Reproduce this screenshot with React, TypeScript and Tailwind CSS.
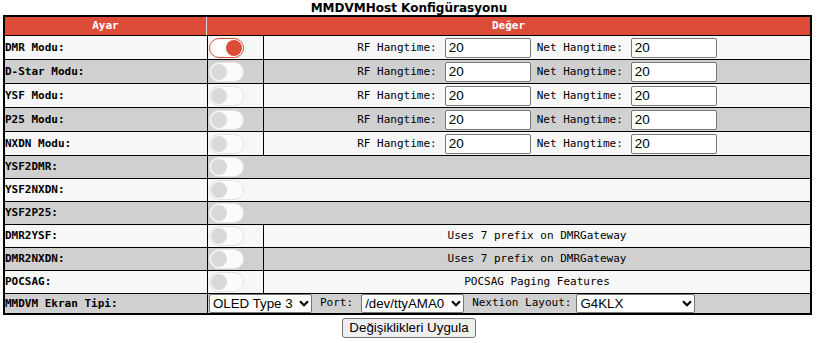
import React from 'react';

const MONO = "font-['DejaVu_Sans_Mono',monospace]";

type Row =
  | { kind: 'mode'; label: string; on?: boolean }
  | { kind: 'wide'; label: string }
  | { kind: 'note'; label: string; note: string };

const ROWS: Row[] = [
  { kind: 'mode', label: 'DMR Modu:', on: true },
  { kind: 'mode', label: 'D-Star Modu:' },
  { kind: 'mode', label: 'YSF Modu:' },
  { kind: 'mode', label: 'P25 Modu:' },
  { kind: 'mode', label: 'NXDN Modu:' },
  { kind: 'wide', label: 'YSF2DMR:' },
  { kind: 'wide', label: 'YSF2NXDN:' },
  { kind: 'wide', label: 'YSF2P25:' },
  { kind: 'note', label: 'DMR2YSF:', note: 'Uses 7 prefix on DMRGateway' },
  { kind: 'note', label: 'DMR2NXDN:', note: 'Uses 7 prefix on DMRGateway' },
  { kind: 'note', label: 'POCSAG:', note: 'POCSAG Paging Features' },
];

const Toggle: React.FC<{ on?: boolean }> = ({ on }) =>
  on ? (
    <span className="flex h-[20px] w-[35px] items-center justify-end rounded-full border-[1.5px] border-[#dd4b39] bg-white pr-[1px]">
      <span className="h-[16px] w-[16px] rounded-full bg-[#dd4b39]" />
    </span>
  ) : (
    <span className="flex h-[20px] w-[35px] items-center justify-start rounded-full border border-[#e3e3e3] bg-[#fbfbfb] pl-[1px]">
      <span className="h-[16px] w-[16px] rounded-full bg-[#d9d9d9]" />
    </span>
  );

const NumInput: React.FC = () => (
  <input
    defaultValue="20"
    className="h-[20px] w-[86px] rounded-[2px] border border-[#767676] bg-white pl-[3px] font-['Liberation_Sans',Arial,sans-serif] text-[13.5px] text-black outline-none"
  />
);

const Select: React.FC<{ w: string; value: string; options: string[] }> = ({ w, value, options }) => (
  <span className={`relative inline-flex ${w}`}>
    <select
      defaultValue={value}
      className="h-[19px] w-full appearance-none rounded-[2px] border border-[#767676] bg-white pl-[3px] font-['Liberation_Sans',Arial,sans-serif] text-[13.3px] leading-[17px] text-black outline-none"
    >
      {options.map(o => (
        <option key={o}>{o}</option>
      ))}
    </select>
    {/* dropdown chevron */}
    <svg
      className="pointer-events-none absolute right-[3px] top-[6px]"
      width="10"
      height="7"
      viewBox="0 0 10 7"
    >
      <path d="M1 1.2 L5 5.2 L9 1.2" fill="none" stroke="#000" strokeWidth="2.2" />
    </svg>
  </span>
);

export default function App() {
  return (
    <div className="w-[818px] bg-white text-black">
      <div className="h-[15px] pt-[1px] text-center font-['DejaVu_Sans',Verdana,sans-serif] text-[12px] font-bold leading-[14px]">
        MMDVMHost Konfigürasyonu
      </div>
      <div className={`ml-[3px] w-[809px] border-2 border-black ${MONO} text-[11px]`}>
        <div className="grid h-[18px] grid-cols-[202px_1fr] bg-[#dd4b39] font-bold text-white">
          <div className="flex items-center justify-center border-r border-[#d8d8d8]">Ayar</div>
          <div className="flex items-center justify-center">Değer</div>
        </div>
        {ROWS.map((r, i) => {
          const bg = i % 2 === 0 ? 'bg-[#f7f7f7]' : 'bg-[#d0d0d0]';
          const label = <div className="flex items-center pt-[1px] font-bold">{r.label}</div>;
          if (r.kind === 'mode') {
            return (
              <div key={r.label} className={`grid h-[24px] grid-cols-[202px_56px_1fr] border-t border-black ${bg}`}>
                {label}
                <div className="flex items-center border-l border-black pl-[1px]">
                  <Toggle on={r.on} />
                </div>
                <div className="flex items-center justify-center border-l border-black pt-[1px]">
                  <span className="mr-[8px]">RF Hangtime:</span>
                  <NumInput />
                  <span className="ml-[6px] mr-[8px]">Net Hangtime:</span>
                  <NumInput />
                </div>
              </div>
            );
          }
          if (r.kind === 'wide') {
            return (
              <div key={r.label} className={`grid h-[23px] grid-cols-[202px_1fr] border-t border-black ${bg}`}>
                {label}
                <div className="flex items-center border-l border-black pl-[1px]">
                  <Toggle />
                </div>
              </div>
            );
          }
          return (
            <div key={r.label} className={`grid h-[23px] grid-cols-[202px_56px_1fr] border-t border-black ${bg}`}>
              {label}
              <div className="flex items-center border-l border-black pl-[1px]">
                <Toggle />
              </div>
              <div className="flex items-center justify-center border-l border-black pt-[1px]">{r.note}</div>
            </div>
          );
        })}
        <div className="grid h-[20px] grid-cols-[202px_1fr] border-t border-black bg-[#d0d0d0]">
          <div className="flex items-center pt-[1px] font-bold">MMDVM Ekran Tipi:</div>
          <div className="flex items-center border-l border-black pl-[1px]">
            <Select w="w-[103px]" value="OLED Type 3" options={['OLED Type 3', 'OLED Type 6', 'Nextion', 'HD44780', 'None']} />
            <span className="ml-[8px] mr-[8px]">Port:</span>
            <Select w="w-[103px]" value="/dev/ttyAMA0" options={['/dev/ttyAMA0', '/dev/ttyUSB0', 'modem']} />
            <span className="ml-[8px] mr-[5px]">Nextion Layout:</span>
            <Select w="w-[119px]" value="G4KLX" options={['G4KLX', 'ON7LDS L2', 'ON7LDS L3']} />
          </div>
        </div>
      </div>
      <div className="mt-[3px] flex justify-center">
        <button className="h-[20px] rounded-[3px] border border-[#767676] bg-[#efefef] px-[6px] font-['Liberation_Sans',Arial,sans-serif] text-[13.33px] leading-[18px] text-black">
          Değişiklikleri Uygula
        </button>
      </div>
    </div>
  );
}
